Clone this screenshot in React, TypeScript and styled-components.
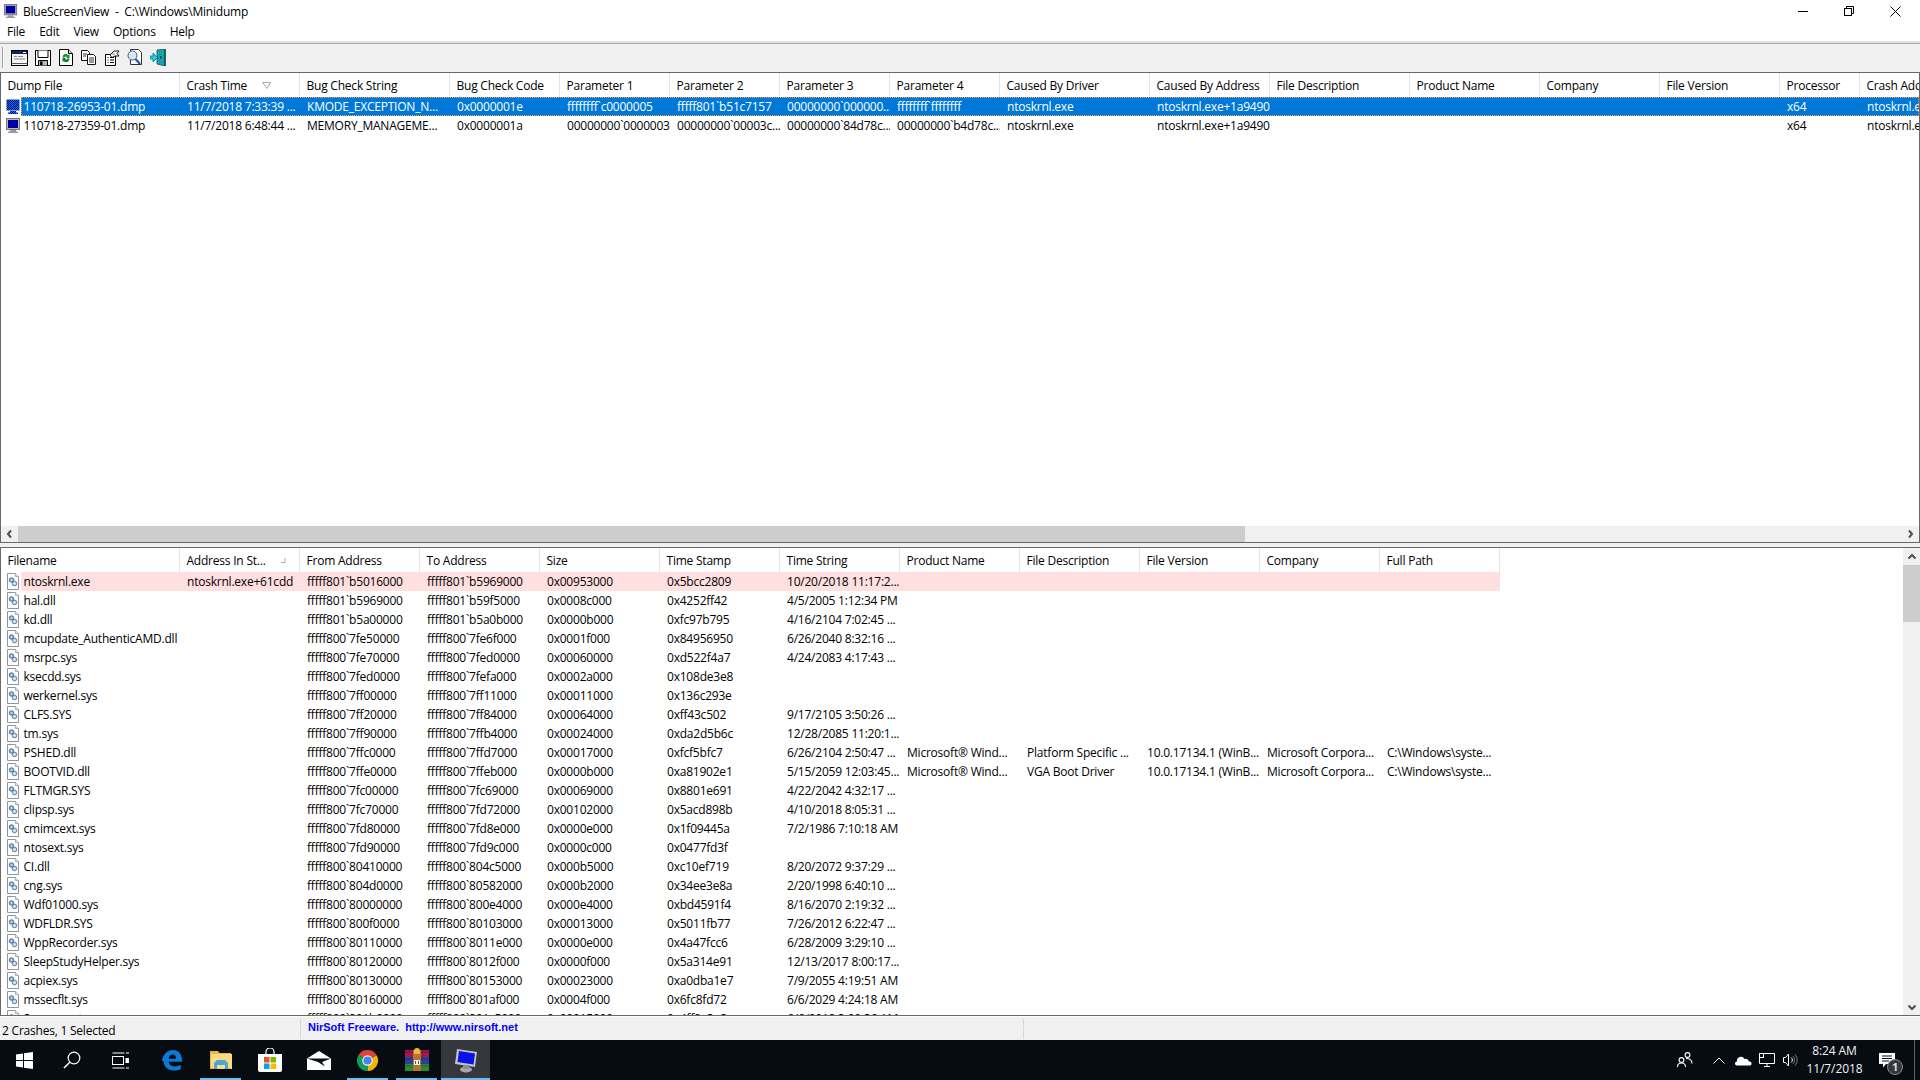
import React from 'react';
import styled, { createGlobalStyle } from 'styled-components';

const Global = createGlobalStyle`
  html, body { margin: 0; padding: 0; background: #fff; }
  body { font-family: "Open Sans", "Noto Sans", sans-serif; font-size: 12px; color: #000; letter-spacing: -0.22px; overflow: hidden; }
  * { box-sizing: border-box; }
`;

const Screen = styled.div`
  width: 1920px; height: 1080px; display: flex; flex-direction: column; overflow: hidden; background: #fff;
`;
const TitleBar = styled.div`
  height: 22px; display: flex; align-items: center; padding-left: 3px; flex: none; background: #fff;
`;
const TitleText = styled.span`
  margin-left: 5px; white-space: pre; position: relative; top: 0;
`;
const WinControls = styled.div`
  margin-left: auto; display: flex; padding-right: 2px;
`;
const WinButton = styled.div`
  width: 46px; height: 22px; display: flex; align-items: center; justify-content: center;
`;
const MenuBar = styled.div`
  height: 19px; display: flex; align-items: center; flex: none; padding-left: 0; background: #fff;
`;
const MenuItem = styled.span`
  padding: 0 7px; line-height: 19px;
`;
const Toolbar = styled.div`
  height: 31px; flex: none; display: flex; align-items: center; background: #f0f0f0;
  border-top: 2px solid #e3e3e3; box-shadow: inset 0 1px 0 #a8a8a8; padding-left: 2px;
`;
const ToolSep = styled.div`
  width: 2px; height: 21px; margin-right: 4px; border-left: 1px solid #a0a0a0; border-right: 1px solid #fff;
`;
const ToolSlot = styled.div`
  width: 23px; height: 24px; display: flex; align-items: center; justify-content: center;
`;
const UpperPane = styled.div`
  height: 471px; flex: none; display: flex; flex-direction: column; overflow: hidden;
  border: 1px solid #696969; border-bottom-width: 1px; background: #fff;
`;
const Splitter = styled.div`
  height: 4px; flex: none; background: #f0f0f0;
`;
const LowerPane = styled.div`
  height: 469px; flex: none; display: flex; overflow: hidden; background: #fff;
  border-top: 1px solid #696969; border-bottom: 1px solid #696969; border-left: 1px solid #696969;
`;
const ListArea = styled.div`
  flex: 1; min-width: 0; display: flex; flex-direction: column; overflow: hidden;
`;
const RowsArea = styled.div`
  flex: 1; min-height: 0; overflow: hidden;
`;
const HeaderRow = styled.div`
  height: 24px; flex: none; display: flex; background: #fff;
`;
const HeaderCell = styled.div<{ $w: number }>`
  width: ${p => p.$w}px; flex: none; height: 24px; display: flex; align-items: center; padding-left: 6.5px;
  border-right: 1px solid #e5e5e5; white-space: nowrap; overflow: hidden;
`;
const SortMark = styled.svg<{ $right: number }>`
  margin-left: auto; margin-right: ${p => p.$right}px; flex: none;
`;
const Row = styled.div`
  height: 19px; display: flex;
`;
const IconSlot = styled.div`
  width: 20px; flex: none; height: 19px; padding-left: 4px; display: flex; align-items: center;
`;
const RowBody = styled.div<{ $tone?: 'selected' | 'pink' }>`
  display: flex; height: 19px; overflow: hidden;
  flex: ${p => (p.$tone === 'selected' ? '1' : 'none')};
  min-width: 0;
  background: ${p => (p.$tone === 'selected' ? '#0078d7' : p.$tone === 'pink' ? '#ffdfdf' : 'transparent')};
  color: ${p => (p.$tone === 'selected' ? '#fff' : '#000')};
  outline: ${p => (p.$tone === 'selected' ? '1px dotted #ff9a3c' : 'none')};
  outline-offset: -1px;
`;
const Cell = styled.div<{ $w: number; $first?: boolean }>`
  width: ${p => p.$w}px; flex: none; line-height: 19px; white-space: nowrap; overflow: hidden;
  padding-left: ${p => (p.$first ? 2.5 : 7)}px;
`;
const HScroll = styled.div`
  height: 16px; flex: none; display: flex; background: #f0f0f0;
`;
const ScrollBtn = styled.div<{ $h?: number }>`
  width: 17px; height: ${p => p.$h ?? 16}px; flex: none; display: flex; align-items: center; justify-content: center;
`;
const HThumb = styled.div<{ $w: number }>`
  width: ${p => p.$w}px; flex: none; background: #cdcdcd;
`;
const Spacer = styled.div`
  flex: 1;
`;
const VScroll = styled.div`
  width: 17px; flex: none; display: flex; flex-direction: column; background: #f0f0f0;
`;
const VThumb = styled.div`
  height: 57px; flex: none; background: #cdcdcd;
`;
const StatusBar = styled.div`
  height: 24px; flex: none; display: flex; background: #f0f0f0; border-top: 1px solid #fbfbfb;
`;
const StatusPanel = styled.div<{ $w: number }>`
  width: ${p => p.$w}px; flex: none; margin-top: 2px; height: 20px; border-right: 1px solid #d7d7d7;
  display: flex; align-items: flex-start; white-space: pre;
`;
const StatusText = styled.span`
  padding: 3px 0 0 2px; line-height: 17px;
`;
const NirLink = styled.span`
  padding: 0 0 0 7px; color: #0000ff; font-weight: 700; font-size: 11px; line-height: 16px; letter-spacing: 0;
  font-family: "Liberation Sans", sans-serif; 
`;
const Taskbar = styled.div`
  height: 40px; flex: none; display: flex; align-items: stretch; background: #070c13; color: #fff;
`;
const TaskGroup = styled.div`
  display: flex;
`;
const SysButton = styled.div`
  width: 48px; display: flex; align-items: center; justify-content: center;
`;
const AppSlot = styled.div<{ $open?: boolean; $active?: boolean }>`
  width: 49px; display: flex; align-items: center; justify-content: center; position: relative;
  background: ${p => (p.$active ? '#34383d' : 'transparent')};
  &::after {
    content: ''; position: absolute; bottom: 0; height: 2px; background: #76b9ed;
    display: ${p => (p.$open ? 'block' : 'none')};
    left: ${p => (p.$active ? 0 : 4)}px; right: ${p => (p.$active ? 0 : 4)}px;
  }
`;
const Apps = styled(TaskGroup)`
  margin-left: 3px;
`;
const Tray = styled.div`
  margin-left: auto; display: flex; align-items: stretch;
`;
const TrayItem = styled.div<{ $w: number }>`
  width: ${p => p.$w}px; display: flex; align-items: center; justify-content: center;
`;
const Clock = styled.div`
  width: 63px; display: flex; flex-direction: column; align-items: center; justify-content: center;
  line-height: 18px; color: #f2f2f2; letter-spacing: -0.1px; white-space: nowrap;
`;
const ActionBtn = styled.div`
  width: 42px; position: relative; display: flex; align-items: center; justify-content: center;
`;
const Badge = styled.div`
  position: absolute; left: 21px; top: 19px; width: 16px; height: 16px; border-radius: 50%;
  background: #34383d; border: 1px solid #8a8a8a; color: #ddd; font-size: 11px; font-weight: 700; line-height: 14px; text-align: center;
`;
const Peek = styled.div`
  width: 12px; border-right: 5px solid #070c13; position: relative;
  box-shadow: inset -1px 0 0 #5b5f63;
`;

const Monitor: React.FC<{ size?: number; hatched?: boolean; id?: string }> = ({ size = 16, hatched, id = 'm' }) => (
  <svg width={size} height={size} viewBox="0 0 16 16">
    <defs>
      <pattern id={id} width="2" height="2" patternUnits="userSpaceOnUse">
        <rect width="2" height="2" fill="#0078d7" />
        <rect width="1" height="1" fill="#00008f" />
        <rect x="1" y="1" width="1" height="1" fill="#00008f" />
      </pattern>
    </defs>
    <rect x="1.5" y="0.5" width="13" height="11" fill={hatched ? `url(#${id})` : '#b8b8b8'} stroke={hatched ? 'none' : '#777'} />
    <rect x="3" y="2" width="10" height="8" fill={hatched ? `url(#${id})` : '#0000a0'} />
    <path d="M5 12h6v1.5h2V15H3v-1.5h2z" fill={hatched ? `url(#${id})` : '#9a9a9a'} />
  </svg>
);

const ModuleIcon = () => (
  <svg width="16" height="17" viewBox="0 0 16 17">
    <path d="M2.5.5h8l3 3v13h-11z" fill="#fff" stroke="#8f959b" />
    <path d="M10.5.5v3h3" fill="#e8edf2" stroke="#a8aeb4" />
    <circle cx="6.5" cy="7" r="2.3" fill="#7ea6cd" stroke="#3e6a96" strokeWidth=".8" />
    <circle cx="9.5" cy="10.5" r="2.3" fill="#b7cfe6" stroke="#3e6a96" strokeWidth=".8" />
    <circle cx="6.5" cy="7" r=".8" fill="#fff" />
    <circle cx="9.5" cy="10.5" r=".8" fill="#fff" />
  </svg>
);

const IconWindow = () => (
  <svg width="17" height="16" viewBox="0 0 17 16">
    <rect x=".5" y=".5" width="16" height="15" fill="#f4f4f4" stroke="#000" />
    <rect x="1" y="1" width="15" height="3" fill="#0a246a" />
    <path d="M12 2.5h3" stroke="#fff" />
    <path d="M3 6.5h3M7 6.5h5M3 9h11" stroke="#8a8a8a" />
    <path d="M1 13.5h15" stroke="#555" />
  </svg>
);
const IconSave = () => (
  <svg width="16" height="16" viewBox="0 0 16 16">
    <path d="M.5.5h15v15H.5z" fill="#fff" stroke="#000" />
    <path d="M3 .5v7h10v-7" fill="#fff" stroke="#000" />
    <path d="M3.5 15.5v-5h9v5" fill="#bbb" stroke="#000" />
    <rect x="5" y="11.5" width="2.5" height="3.5" fill="#000" />
  </svg>
);
const IconRefresh = () => (
  <svg width="14" height="17" viewBox="0 0 14 17">
    <path d="M.5.5h9l4 4v12H.5z" fill="#fff" stroke="#000" />
    <path d="M9.5.5v4h4" fill="#ddd" stroke="#000" />
    <path d="M3.5 8a3.5 3.5 0 0 1 6-2l1-1v4H7l1-1a2 2 0 0 0-3 1z" fill="#139a2f" />
    <path d="M10.5 10a3.5 3.5 0 0 1-6 2l-1 1V9h3.500l-1 1a2 2 0 0 0 3-1z" fill="#0d7a25" />
  </svg>
);
const IconCopy = () => (
  <svg width="15" height="15" viewBox="0 0 15 15">
    <path d="M.5.5h6l2 2v8h-8z" fill="#fff" stroke="#111" />
    <path d="M6.5 4.500h6l2 2v8h-8z" fill="#fff" stroke="#111" />
    <path d="M2 4h4M2 6h3M8 8h5M8 10h5M8 12h5" stroke="#333" />
  </svg>
);
const IconProps = () => (
  <svg width="16" height="16" viewBox="0 0 16 16">
    <path d="M1.500 4.500h10v11h-10z" fill="#fff" stroke="#000" />
    <path d="M3.500 7.500h1M6 7.500h4M3.500 10h1M6 10h4M3.500 12.500h1M6 12.500h4" stroke="#000" />
    <path d="M6 5l4-4h5l-2 2.500 2 2.500H11l-3 1.500z" fill="#fff" stroke="#000" strokeWidth=".9" />
    <path d="M8 4h3" stroke="#888" />
  </svg>
);
const IconFind = () => (
  <svg width="16" height="17" viewBox="0 0 16 17">
    <path d="M3.500.5h8l3 3v12h-11z" fill="#fff" stroke="#333" />
    <circle cx="5.500" cy="6.500" r="4.500" fill="#cfe8f8" stroke="#557" />
    <path d="M4 4.500a2.500 2.500 0 0 1 3-1" stroke="#fff" fill="none" />
    <path d="M8.500 10l4.500 5" stroke="#1f5fbf" strokeWidth="2.400" />
  </svg>
);
const IconExit = () => (
  <svg width="16" height="17" viewBox="0 0 16 17">
    <path d="M7 1l8-1v17l-8-2z" fill="#17a2ad" stroke="#0a5d66" strokeWidth=".8" />
    <path d="M15 0v17" stroke="#064a52" strokeWidth="1.500" />
    <rect x="10" y="7" width="1.500" height="2.500" fill="#0a3c42" />
    <path d="M0 7h3V4l4.500 4.500L3 13v-3H0z" fill="#1fd0e0" stroke="#07616b" strokeWidth=".7" />
  </svg>
);

const Chevron: React.FC<{ dir: 'l' | 'r' | 'u' | 'd' }> = ({ dir }) => {
  const d = { l: 'M6 1.500L3 5l3 3.500', r: 'M3 1.500L6 5 3 8.500', u: 'M1.500 6.500L5 3l3.500 3.500', d: 'M1.500 3.500L5 7l3.500-3.500' }[dir];
  return (
    <svg width="10" height="10" viewBox="0 0 10 10">
      <path d={d} fill="none" stroke="#505050" strokeWidth="2" />
    </svg>
  );
};

const WinLogo = () => (
  <svg width="17" height="17" viewBox="0 0 17 17" fill="#fff">
    <path d="M0 2.400l7-1V8H0zM8 1.300L17 0v8H8zM0 9h7v6.600l-7-1zM8 9h9v8l-9-1.300z" />
  </svg>
);
const SearchIcon = () => (
  <svg width="18" height="18" viewBox="0 0 18 18" fill="none" stroke="#fff" strokeWidth="1.200">
    <circle cx="11" cy="7" r="5.800" />
    <path d="M6.800 11.200L1 17" strokeWidth="1.500" />
  </svg>
);
const TaskViewIcon = () => (
  <svg width="17" height="17" viewBox="0 0 17 17" fill="none" stroke="#fff">
    <path d="M.5 1h12M.5 16h12" strokeWidth="1.200" />
    <rect x=".5" y="4.500" width="11" height="8" />
    <rect x="14" y="6.500" width="3" height="4" fill="#fff" />
    <path d="M14 1h3M14 16h3" />
  </svg>
);
const EdgeIcon = () => (
  <svg width="22" height="22" viewBox="0 0 24 24">
    <path fillRule="evenodd" fill="#0a7ad6" d="M1 13C2 6 7 1 13 1c6.500 0 10 5 10 11.500V14H8.500c.3 3.500 3.200 5 6.500 5 2.500 0 4.500-.6 6.500-1.700V22c-2 1-4.500 1.500-7.500 1.500C7 23.500 3 19 3 14c0-1-.1-.5-2-1zM8.500 10.500h8c0-2.500-1.500-4.500-4-4.500-2.300 0-3.800 2-4 4.500z" />
  </svg>
);
const FolderIcon = () => (
  <svg width="22" height="20" viewBox="0 0 22 20">
    <path d="M0 1h8l1.500 2H21v2H0z" fill="#e8b93f" />
    <path d="M0 4h22v15H0z" fill="#fbdc80" />
    <path d="M0 19V3h1v15h20v1z" fill="#e3b54a" />
    <path d="M7 10h8l3 3v6h-3v-4H7v4H4v-6z" fill="#4aa6dd" />
    <rect x="8" y="15" width="6" height="4" fill="#fbdc80" />
  </svg>
);
const StoreIcon = () => (
  <svg width="24" height="24" viewBox="0 0 24 24">
    <path d="M8 7V4a4 4 0 0 1 8 0v3" fill="none" stroke="#fff" strokeWidth="1.200" />
    <path d="M0 6h24v16a2 2 0 0 1-2 2H2a2 2 0 0 1-2-2z" fill="#fff" />
    <rect x="6" y="9" width="5.500" height="5.500" fill="#f25022" />
    <rect x="12.500" y="9" width="5.500" height="5.500" fill="#7fba00" />
    <rect x="6" y="15.500" width="5.500" height="5.500" fill="#00a4ef" />
    <rect x="12.500" y="15.500" width="5.500" height="5.500" fill="#ffb900" />
  </svg>
);
const MailIcon = () => (
  <svg width="24" height="19" viewBox="0 0 24 19">
    <path d="M0 7.500L12 0l12 7.500V19H0z" fill="#fff" />
    <path d="M0 7.500h24l-9 3.500 3 4.500L11 11z" fill="#070c13" />
  </svg>
);
const ChromeIcon = () => (
  <svg width="23" height="23" viewBox="0 0 24 24">
    <path d="M12 12L2.470 6.500A11 11 0 0 1 21.530 6.500z" fill="#db4437" />
    <path d="M12 12L21.530 6.500A11 11 0 0 1 12 23z" fill="#f4b400" />
    <path d="M12 12L12 23A11 11 0 0 1 2.470 6.500z" fill="#0f9d58" />
    <circle cx="12" cy="12" r="5.500" fill="#f1f1f1" />
    <circle cx="12" cy="12" r="4.300" fill="#4285f4" />
  </svg>
);
const RarIcon = () => (
  <svg width="24" height="24" viewBox="0 0 24 24">
    <rect x="0" y="2" width="24" height="7" fill="#a3174f" />
    <rect x="0" y="9" width="24" height="7" fill="#2c3fa0" />
    <rect x="0" y="16" width="24" height="7" fill="#2c8a2f" />
    <path d="M0 4h24M0 11h24M0 18h24" stroke="#000" strokeOpacity=".3" />
    <rect x="8" y="2" width="8" height="21" fill="#b4752a" />
    <path d="M9 6V3a3 3 0 0 1 6 0v3z" fill="#f1b93a" />
    <rect x="9" y="12" width="6" height="5" fill="#f2f2f2" />
    <path d="M10 13h1v3h-1zM13 13h1v3h-1z" fill="#555" />
  </svg>
);
const BsvIcon = () => (
  <svg width="24" height="25" viewBox="0 0 24 25">
    <path d="M3 1l20 3-2 15-20-3z" fill="#bfc2c6" />
    <path d="M5 3l16 2.500-1.500 11L3.500 14z" fill="#0a10e8" />
    <ellipse cx="12" cy="21.500" rx="6" ry="3" fill="#a7a9ac" />
    <rect x="9" y="17" width="6" height="4" fill="#8c8e91" />
  </svg>
);
const PeopleIcon = () => (
  <svg width="16" height="16" viewBox="0 0 16 16" fill="none" stroke="#fff" strokeWidth="1.100">
    <circle cx="10.500" cy="3" r="2.400" />
    <circle cx="4.500" cy="8" r="2.400" />
    <path d="M.5 15c0-2.500 1.500-4 4-4s4 1.500 4 4M9 6.500c3.500 0 6 1.500 6 5" />
  </svg>
);
const CloudIcon = () => (
  <svg width="17" height="11" viewBox="0 0 17 11" fill="#fff">
    <path d="M2 10.500A2 2 0 0 1 2 6.500 4 4 0 0 1 9.500 4 3.300 3.300 0 0 1 14 6.500a2 2 0 0 1 1 4z" />
  </svg>
);
const NetworkIcon = () => (
  <svg width="16" height="14" viewBox="0 0 16 14" fill="none" stroke="#fff">
    <path d="M3.500 .5h12v10h-15V5" />
    <rect x=".5" y=".5" width="4" height="4" fill="#070c13" />
    <path d="M8 11v2M5 13.500h6" />
  </svg>
);
const VolumeIcon = () => (
  <svg width="16" height="14" viewBox="0 0 16 14" fill="none" stroke="#fff">
    <path d="M.5 4.500h2l3-3.500v12l-3-3.500h-2z" />
    <path d="M8 4.500a3 3 0 0 1 0 5" />
    <path d="M10 3a6 6 0 0 1 0 8M12 1.500a8 8 0 0 1 0 11" stroke="#777" />
  </svg>
);
const NoteIcon = () => (
  <svg width="16" height="15" viewBox="0 0 16 15">
    <path d="M0 0h16v11H7l-3 3.500V11H0z" fill="#fff" />
    <path d="M3 3h10M3 5.500h10M3 8h7" stroke="#070c13" />
  </svg>
);

const upperCols = [179, 120, 150, 110, 110, 110, 110, 110, 150, 120, 140, 130, 120, 120, 80, 80, 120];
const upperHead = ['Dump File', 'Crash Time', 'Bug Check String', 'Bug Check Code', 'Parameter 1', 'Parameter 2', 'Parameter 3', 'Parameter 4', 'Caused By Driver', 'Caused By Address', 'File Description', 'Product Name', 'Company', 'File Version', 'Processor', 'Crash Address', 'Stack Address 1'];
const upperRows = [
  ['110718-26953-01.dmp', '11/7/2018 7:33:39 ...', 'KMODE_EXCEPTION_N...', '0x0000001e', 'ffffffff`c0000005', 'fffff801`b51c7157', '00000000`000000...', 'ffffffff`ffffffff', 'ntoskrnl.exe', 'ntoskrnl.exe+1a9490', '', '', '', '', 'x64', 'ntoskrnl.exe+1a9490', ''],
  ['110718-27359-01.dmp', '11/7/2018 6:48:44 ...', 'MEMORY_MANAGEME...', '0x0000001a', '00000000`0000003f', '00000000`00003c...', '00000000`84d78c...', '00000000`b4d78c...', 'ntoskrnl.exe', 'ntoskrnl.exe+1a9490', '', '', '', '', 'x64', 'ntoskrnl.exe+1a9490', ''],
];
const lowerCols = [179, 120, 120, 120, 120, 120, 120, 120, 120, 120, 120, 120];
const lowerHead = ['Filename', 'Address In St...', 'From Address', 'To Address', 'Size', 'Time Stamp', 'Time String', 'Product Name', 'File Description', 'File Version', 'Company', 'Full Path'];
const ms = 'Microsoft® Wind...';
const fv = '10.0.17134.1 (WinB...';
const co = 'Microsoft Corpora...';
const fp = 'C:\\Windows\\syste...';
const r = (name: string, from: string, to: string, size: string, ts: string, str = '', extra: string[] = []) => [name, '', from, to, size, ts, str, ...extra];
const lowerRows: string[][] = [
  ['ntoskrnl.exe', 'ntoskrnl.exe+61cdd', 'fffff801`b5016000', 'fffff801`b5969000', '0x00953000', '0x5bcc2809', '10/20/2018 11:17:2...'],
  r('hal.dll', 'fffff801`b5969000', 'fffff801`b59f5000', '0x0008c000', '0x4252ff42', '4/5/2005 1:12:34 PM'),
  r('kd.dll', 'fffff801`b5a00000', 'fffff801`b5a0b000', '0x0000b000', '0xfc97b795', '4/16/2104 7:02:45 ...'),
  r('mcupdate_AuthenticAMD.dll', 'fffff800`7fe50000', 'fffff800`7fe6f000', '0x0001f000', '0x84956950', '6/26/2040 8:32:16 ...'),
  r('msrpc.sys', 'fffff800`7fe70000', 'fffff800`7fed0000', '0x00060000', '0xd522f4a7', '4/24/2083 4:17:43 ...'),
  r('ksecdd.sys', 'fffff800`7fed0000', 'fffff800`7fefa000', '0x0002a000', '0x108de3e8'),
  r('werkernel.sys', 'fffff800`7ff00000', 'fffff800`7ff11000', '0x00011000', '0x136c293e'),
  r('CLFS.SYS', 'fffff800`7ff20000', 'fffff800`7ff84000', '0x00064000', '0xff43c502', '9/17/2105 3:50:26 ...'),
  r('tm.sys', 'fffff800`7ff90000', 'fffff800`7ffb4000', '0x00024000', '0xda2d5b6c', '12/28/2085 11:20:1...'),
  r('PSHED.dll', 'fffff800`7ffc0000', 'fffff800`7ffd7000', '0x00017000', '0xfcf5bfc7', '6/26/2104 2:50:47 ...', [ms, 'Platform Specific ...', fv, co, fp]),
  r('BOOTVID.dll', 'fffff800`7ffe0000', 'fffff800`7ffeb000', '0x0000b000', '0xa81902e1', '5/15/2059 12:03:45...', [ms, 'VGA Boot Driver', fv, co, fp]),
  r('FLTMGR.SYS', 'fffff800`7fc00000', 'fffff800`7fc69000', '0x00069000', '0x8801e691', '4/22/2042 4:32:17 ...'),
  r('clipsp.sys', 'fffff800`7fc70000', 'fffff800`7fd72000', '0x00102000', '0x5acd898b', '4/10/2018 8:05:31 ...'),
  r('cmimcext.sys', 'fffff800`7fd80000', 'fffff800`7fd8e000', '0x0000e000', '0x1f09445a', '7/2/1986 7:10:18 AM'),
  r('ntosext.sys', 'fffff800`7fd90000', 'fffff800`7fd9c000', '0x0000c000', '0x0477fd3f'),
  r('CI.dll', 'fffff800`80410000', 'fffff800`804c5000', '0x000b5000', '0xc10ef719', '8/20/2072 9:37:29 ...'),
  r('cng.sys', 'fffff800`804d0000', 'fffff800`80582000', '0x000b2000', '0x34ee3e8a', '2/20/1998 6:40:10 ...'),
  r('Wdf01000.sys', 'fffff800`80000000', 'fffff800`800e4000', '0x000e4000', '0xbd4591f4', '8/16/2070 2:19:32 ...'),
  r('WDFLDR.SYS', 'fffff800`800f0000', 'fffff800`80103000', '0x00013000', '0x5011fb77', '7/26/2012 6:22:47 ...'),
  r('WppRecorder.sys', 'fffff800`80110000', 'fffff800`8011e000', '0x0000e000', '0x4a47fcc6', '6/28/2009 3:29:10 ...'),
  r('SleepStudyHelper.sys', 'fffff800`80120000', 'fffff800`8012f000', '0x0000f000', '0x5a314e91', '12/13/2017 8:00:17...'),
  r('acpiex.sys', 'fffff800`80130000', 'fffff800`80153000', '0x00023000', '0xa0dba1e7', '7/9/2055 4:19:51 AM'),
  r('mssecflt.sys', 'fffff800`80160000', 'fffff800`801af000', '0x0004f000', '0x6fc8fd72', '6/6/2029 4:24:18 AM'),
  r('Sgrmagent.sys', 'fffff800`801b0000', 'fffff800`801c5000', '0x00015000', '0x4ff8a3e2', '6/6/2018 3:00:36 AM'),
];

const Head: React.FC<{ cols: number[]; labels: string[]; sort: number }> = ({ cols, labels, sort }) => (
  <HeaderRow>
    {labels.map((l, i) => (
      <HeaderCell key={l} $w={cols[i]}>
        {l}
        {i === 1 && sort === 0 && (
          <SortMark $right={28} width="9" height="7" viewBox="0 0 9 7">
            <path d="M.5.500h8L5 6.500z" fill="none" stroke="#a8a8a8" />
          </SortMark>
        )}
        {i === 1 && sort === 1 && (
          <SortMark $right={13} width="5" height="5" viewBox="0 0 5 5">
            <path d="M4 0v4.500H0" fill="none" stroke="#a8a8a8" />
          </SortMark>
        )}
      </HeaderCell>
    ))}
  </HeaderRow>
);

export default function App() {
  return (
    <Screen>
      <Global />
      <TitleBar>
        <Monitor size={15} id="title" />
        <TitleText>BlueScreenView  -  C:\Windows\Minidump</TitleText>
        <WinControls>
          <WinButton>
            <svg width="10" height="10" viewBox="0 0 10 10"><path d="M0 5.500h10" stroke="#000" /></svg>
          </WinButton>
          <WinButton>
            <svg width="10" height="10" viewBox="0 0 10 10" fill="none" stroke="#000"><rect x=".5" y="2.500" width="7" height="7" /><path d="M2.500 2.500v-2h7v7h-2" /></svg>
          </WinButton>
          <WinButton>
            <svg width="11" height="11" viewBox="0 0 11 11" stroke="#000"><path d="M.5.500l10 10M10.500.500l-10 10" /></svg>
          </WinButton>
        </WinControls>
      </TitleBar>
      <MenuBar>
        {['File', 'Edit', 'View', 'Options', 'Help'].map(m => <MenuItem key={m}>{m}</MenuItem>)}
      </MenuBar>
      <Toolbar>
        <ToolSep />
        <ToolSlot><IconWindow /></ToolSlot>
        <ToolSlot><IconSave /></ToolSlot>
        <ToolSlot><IconRefresh /></ToolSlot>
        <ToolSlot><IconCopy /></ToolSlot>
        <ToolSlot><IconProps /></ToolSlot>
        <ToolSlot><IconFind /></ToolSlot>
        <ToolSlot><IconExit /></ToolSlot>
      </Toolbar>
      <UpperPane>
        <Head cols={upperCols} labels={upperHead} sort={0} />
        <RowsArea>
          {upperRows.map((row, ri) => (
            <Row key={row[0]}>
              <IconSlot><Monitor hatched={ri === 0} id={`d${ri}`} /></IconSlot>
              <RowBody $tone={ri === 0 ? 'selected' : undefined}>
                {row.map((c, i) => (
                  <Cell key={i} $w={i === 0 ? upperCols[0] - 20 : upperCols[i]} $first={i === 0}>{c}</Cell>
                ))}
              </RowBody>
            </Row>
          ))}
        </RowsArea>
        <HScroll>
          <ScrollBtn><Chevron dir="l" /></ScrollBtn>
          <HThumb $w={1227} />
          <Spacer />
          <ScrollBtn><Chevron dir="r" /></ScrollBtn>
        </HScroll>
      </UpperPane>
      <Splitter />
      <LowerPane>
        <ListArea>
          <Head cols={lowerCols} labels={lowerHead} sort={1} />
          <RowsArea>
            {lowerRows.map((row, ri) => (
              <Row key={row[0]}>
                <IconSlot><ModuleIcon /></IconSlot>
                <RowBody $tone={ri === 0 ? 'pink' : undefined}>
                  {lowerCols.map((w, i) => (
                    <Cell key={i} $w={i === 0 ? w - 20 : w} $first={i === 0}>{row[i] ?? ''}</Cell>
                  ))}
                </RowBody>
              </Row>
            ))}
          </RowsArea>
        </ListArea>
        <VScroll>
          <ScrollBtn $h={17}><Chevron dir="u" /></ScrollBtn>
          <VThumb />
          <Spacer />
          <ScrollBtn $h={17}><Chevron dir="d" /></ScrollBtn>
        </VScroll>
      </LowerPane>
      <StatusBar>
        <StatusPanel $w={301}><StatusText>2 Crashes, 1 Selected</StatusText></StatusPanel>
        <StatusPanel $w={723}><NirLink>NirSoft Freeware.  http://www.nirsoft.net</NirLink></StatusPanel>
      </StatusBar>
      <Taskbar>
        <TaskGroup>
          <SysButton><WinLogo /></SysButton>
          <SysButton><SearchIcon /></SysButton>
          <SysButton><TaskViewIcon /></SysButton>
        </TaskGroup>
        <Apps>
          <AppSlot><EdgeIcon /></AppSlot>
          <AppSlot $open><FolderIcon /></AppSlot>
          <AppSlot><StoreIcon /></AppSlot>
          <AppSlot><MailIcon /></AppSlot>
          <AppSlot $open><ChromeIcon /></AppSlot>
          <AppSlot $open><RarIcon /></AppSlot>
          <AppSlot $open $active><BsvIcon /></AppSlot>
        </Apps>
        <Tray>
          <TrayItem $w={44}><PeopleIcon /></TrayItem>
          <TrayItem $w={24}>
            <svg width="12" height="7" viewBox="0 0 12 7" fill="none" stroke="#fff"><path d="M.5 6.500L6 1l5.500 5.500" /></svg>
          </TrayItem>
          <TrayItem $w={24}><CloudIcon /></TrayItem>
          <TrayItem $w={24}><NetworkIcon /></TrayItem>
          <TrayItem $w={24}><VolumeIcon /></TrayItem>
          <Clock><span>8:24 AM</span><span>11/7/2018</span></Clock>
          <ActionBtn>
            <NoteIcon />
            <Badge>1</Badge>
          </ActionBtn>
          <Peek />
        </Tray>
      </Taskbar>
    </Screen>
  );
}
